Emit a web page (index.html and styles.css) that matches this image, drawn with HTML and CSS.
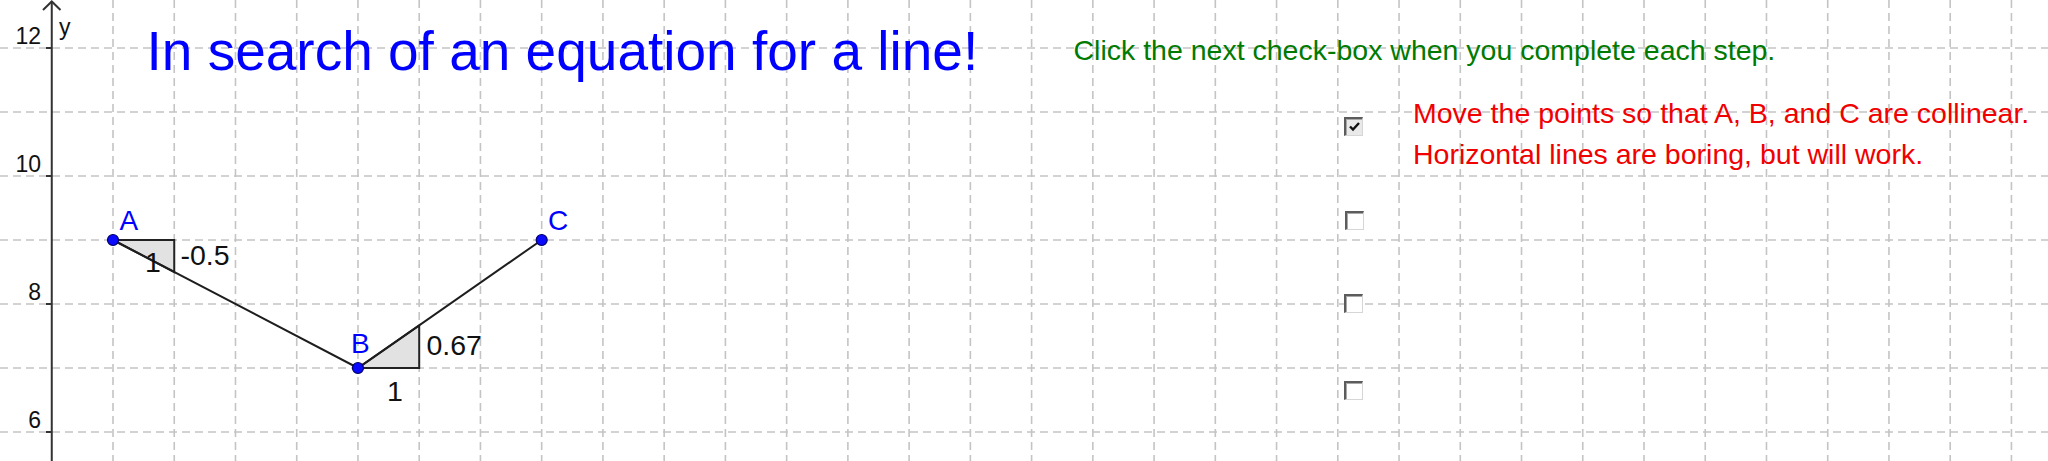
FILE: index.html
```html
<!DOCTYPE html>
<html lang="en">
<head>
<meta charset="utf-8">
<title>In search of an equation for a line!</title>
<link rel="stylesheet" href="styles.css">
</head>
<body>
<div class="board">
  <svg class="plot" width="2048" height="461" viewBox="0 0 2048 461" xmlns="http://www.w3.org/2000/svg">
    <path class="grid grid-v" d="M113 0V461M174.24 0V461M235.48 0V461M296.72 0V461M357.96 0V461M419.2 0V461M480.44 0V461M541.68 0V461M602.92 0V461M664.16 0V461M725.4 0V461M786.64 0V461M847.88 0V461M909.12 0V461M970.36 0V461M1031.6 0V461M1092.84 0V461M1154.08 0V461M1215.32 0V461M1276.56 0V461M1337.8 0V461M1399.04 0V461M1460.28 0V461M1521.52 0V461M1582.76 0V461M1644 0V461M1705.24 0V461M1766.48 0V461M1827.72 0V461M1888.96 0V461M1950.2 0V461M2011.44 0V461"/>
    <path class="grid grid-h" d="M0 48H2048M0 112H2048M0 176H2048M0 240H2048M0 304H2048M0 368H2048M0 432H2048"/>
    <path class="axis" d="M51.76 1V461M46 48H52M46 176H52M46 304H52M46 432H52"/>
    <path class="axis" d="M43 10L51.76 1.5L60.5 10"/>
    <text class="axis-num" x="41" y="44" text-anchor="end">12</text>
    <text class="axis-num" x="41" y="172" text-anchor="end">10</text>
    <text class="axis-num" x="41" y="300" text-anchor="end">8</text>
    <text class="axis-num" x="41" y="428" text-anchor="end">6</text>
    <text class="axis-num" x="59" y="35">y</text>

    <polygon class="slope" points="113,240 174.24,240 174.24,272"/>
    <polygon class="slope" points="357.96,368 419.2,368 419.2,325.33"/>
    <path class="seg" d="M113 240L357.96 368L541.68 240"/>

    <text class="val" x="145" y="272">1</text>
    <text class="val" x="180.5" y="265">-0.5</text>
    <text class="val" x="387" y="401">1</text>
    <text class="val" x="426.5" y="355">0.67</text>

    <circle class="pt" cx="113" cy="240" r="5.5"/>
    <circle class="pt" cx="357.96" cy="368" r="5.5"/>
    <circle class="pt" cx="541.68" cy="240" r="5.5"/>
    <text class="pt-label" x="119.5" y="230">A</text>
    <text class="pt-label" x="351" y="353">B</text>
    <text class="pt-label" x="548" y="230">C</text>
  </svg>

  <h1 class="title">In search of an equation for a line!</h1>
  <p class="hint">Click the next check-box when you complete each step.</p>

  <div class="step">
    <span class="box box-checked">
      <svg class="tick" width="13" height="13" viewBox="0 0 13 13" xmlns="http://www.w3.org/2000/svg"><path d="M2 6.5L5 9.5L11 3"/></svg>
    </span>
    <p class="step-text">Move the points so that A, B, and C are collinear.<br>Horizontal lines are boring, but will work.</p>
  </div>
  <span class="box box-free box-2"></span>
  <span class="box box-free box-3"></span>
  <span class="box box-free box-4"></span>
</div>
</body>
</html>
```

FILE: styles.css
```css
html, body {
  margin: 0;
  padding: 0;
  background: #ffffff;
}

.board {
  position: relative;
  width: 2048px;
  height: 461px;
  overflow: hidden;
  background: #ffffff;
  font-family: "Liberation Sans", Arial, sans-serif;
}

.plot {
  position: absolute;
  left: 0;
  top: 0;
  display: block;
}

.grid {
  fill: none;
  stroke: #c4c4c4;
  stroke-width: 1.6;
  stroke-dasharray: 8 5;
}

.axis {
  fill: none;
  stroke: #333333;
  stroke-width: 2;
}

.axis-num {
  font-family: "Liberation Sans", Arial, sans-serif;
  font-size: 23px;
  fill: #111111;
}

.slope {
  fill: #e2e2e2;
  stroke: #222222;
  stroke-width: 2;
  stroke-linejoin: miter;
}

.seg {
  fill: none;
  stroke: #1e1e1e;
  stroke-width: 2;
}

.val {
  font-family: "Liberation Sans", Arial, sans-serif;
  font-size: 28.5px;
  fill: #111111;
}

.pt {
  fill: #0a0aff;
  stroke: #000066;
  stroke-width: 1.2;
}

.pt-label {
  font-family: "Liberation Sans", Arial, sans-serif;
  font-size: 28px;
  fill: #0000ff;
}

.title {
  position: absolute;
  left: 146.5px;
  top: 24px;
  margin: 0;
  font-size: 55px;
  line-height: 55px;
  font-weight: normal;
  color: #0000ff;
  white-space: nowrap;
}

.hint {
  position: absolute;
  left: 1073.5px;
  top: 36px;
  margin: 0;
  font-size: 28.5px;
  line-height: 28.5px;
  color: #007a00;
  white-space: nowrap;
}

.step {
  position: absolute;
  left: 1344px;
  top: 92.6px;
  display: flex;
  align-items: flex-start;
  gap: 50px;
}

.step .box {
  margin-top: 24.4px;
}

.step-text {
  margin: 0;
  font-size: 28.5px;
  line-height: 41px;
  color: #f00000;
  white-space: nowrap;
}

.box {
  display: flex;
  align-items: center;
  justify-content: center;
  width: 19px;
  height: 19px;
  box-sizing: border-box;
  border-top: 2px solid #5c5c5c;
  border-left: 2px solid #5c5c5c;
  border-right: 1px solid #d6d6d6;
  border-bottom: 1px solid #d6d6d6;
  background: #ffffff;
  box-shadow: inset 1px 1px 0 #a8a8a8;
}

.box-checked {
  background: #e9e9e9;
}

.tick path {
  fill: none;
  stroke: #111111;
  stroke-width: 2.4;
}

.box-free {
  position: absolute;
}

.box-2 {
  left: 1345px;
  top: 211px;
}

.box-3 {
  left: 1344px;
  top: 294px;
}

.box-4 {
  left: 1344px;
  top: 381px;
}
```
